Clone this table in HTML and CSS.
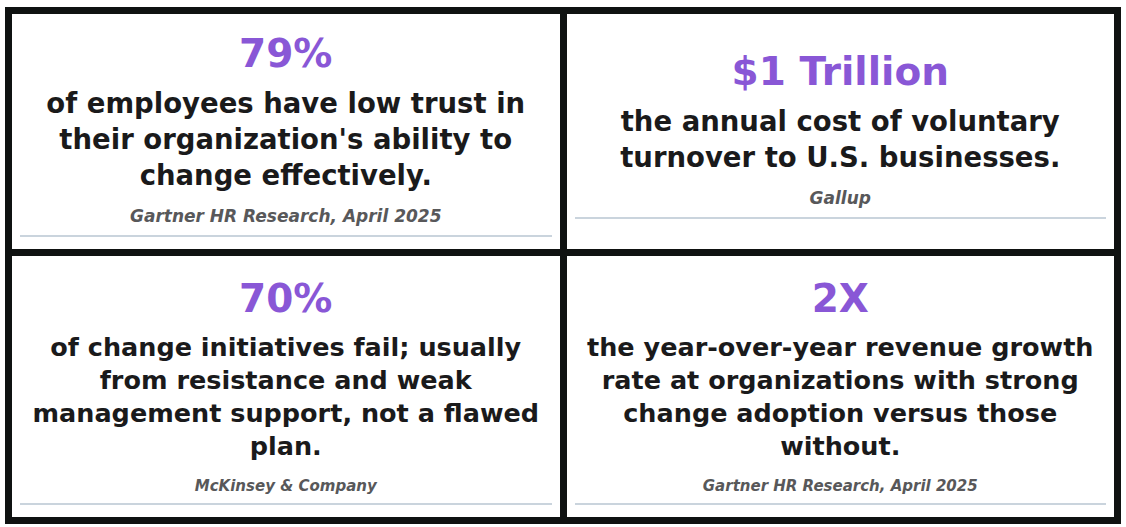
FILE: index.html
```html
<!DOCTYPE html>
<html lang="en">
<head>
<meta charset="utf-8">
<title>Change statistics</title>
<link rel="stylesheet" href="styles.css">
</head>
<body>
  <section class="stats">
    <article class="card">
      <div class="card-body">
        <h2 class="stat">79%</h2>
        <p class="desc">of employees have low trust in their organization's ability to change effectively.</p>
        <p class="source">Gartner HR Research, April 2025</p>
      </div>
    </article>
    <article class="card">
      <div class="card-body">
        <h2 class="stat">$1 Trillion</h2>
        <p class="desc">the annual cost of voluntary turnover to U.S. businesses.</p>
        <p class="source">Gallup</p>
      </div>
    </article>
    <article class="card card--compact">
      <div class="card-body">
        <h2 class="stat">70%</h2>
        <p class="desc">of change initiatives fail; usually from resistance and weak management support, not a flawed plan.</p>
        <p class="source">McKinsey &amp; Company</p>
      </div>
    </article>
    <article class="card card--compact">
      <div class="card-body">
        <h2 class="stat">2X</h2>
        <p class="desc">the year-over-year revenue growth rate at organizations with strong change adoption versus those without.</p>
        <p class="source">Gartner HR Research, April 2025</p>
      </div>
    </article>
  </section>
</body>
</html>
```

FILE: styles.css
```css
html, body {
  margin: 0;
  padding: 0;
  background: #ffffff;
}

body {
  font-family: "DejaVu Sans", "Liberation Sans", sans-serif;
}

.stats {
  margin: 7px 5px 3px;
  padding: 7px;
  gap: 7px;
  background: #0f1211;
  display: grid;
  grid-template-columns: 1fr 1fr;
}

.card {
  background: #ffffff;
  display: flex;
  flex-direction: column;
  justify-content: center;
  padding: 17px 8px 12px;
}

.card-body {
  text-align: center;
  border-bottom: 2px solid #cad4dd;
  padding-bottom: 8px;
}

.stat {
  margin: 0;
  font-size: 39px;
  line-height: 46px;
  font-weight: 700;
  color: #8957d6;
}

.desc {
  margin: 8px 0 0;
  font-size: 27.5px;
  line-height: 36px;
  font-weight: 700;
  color: #1a1a1b;
}

.source {
  margin: 12px 0 0;
  font-size: 17px;
  line-height: 22px;
  font-weight: 700;
  font-style: italic;
  color: #58585a;
}

.card--compact {
  padding: 20px 8px 12px;
}

.card--compact .card-body {
  padding-bottom: 7px;
}

.card--compact .desc {
  margin-top: 9px;
  font-size: 25.5px;
  line-height: 33px;
}

.card--compact .source {
  margin-top: 13px;
  font-size: 15px;
  line-height: 20px;
}
```
